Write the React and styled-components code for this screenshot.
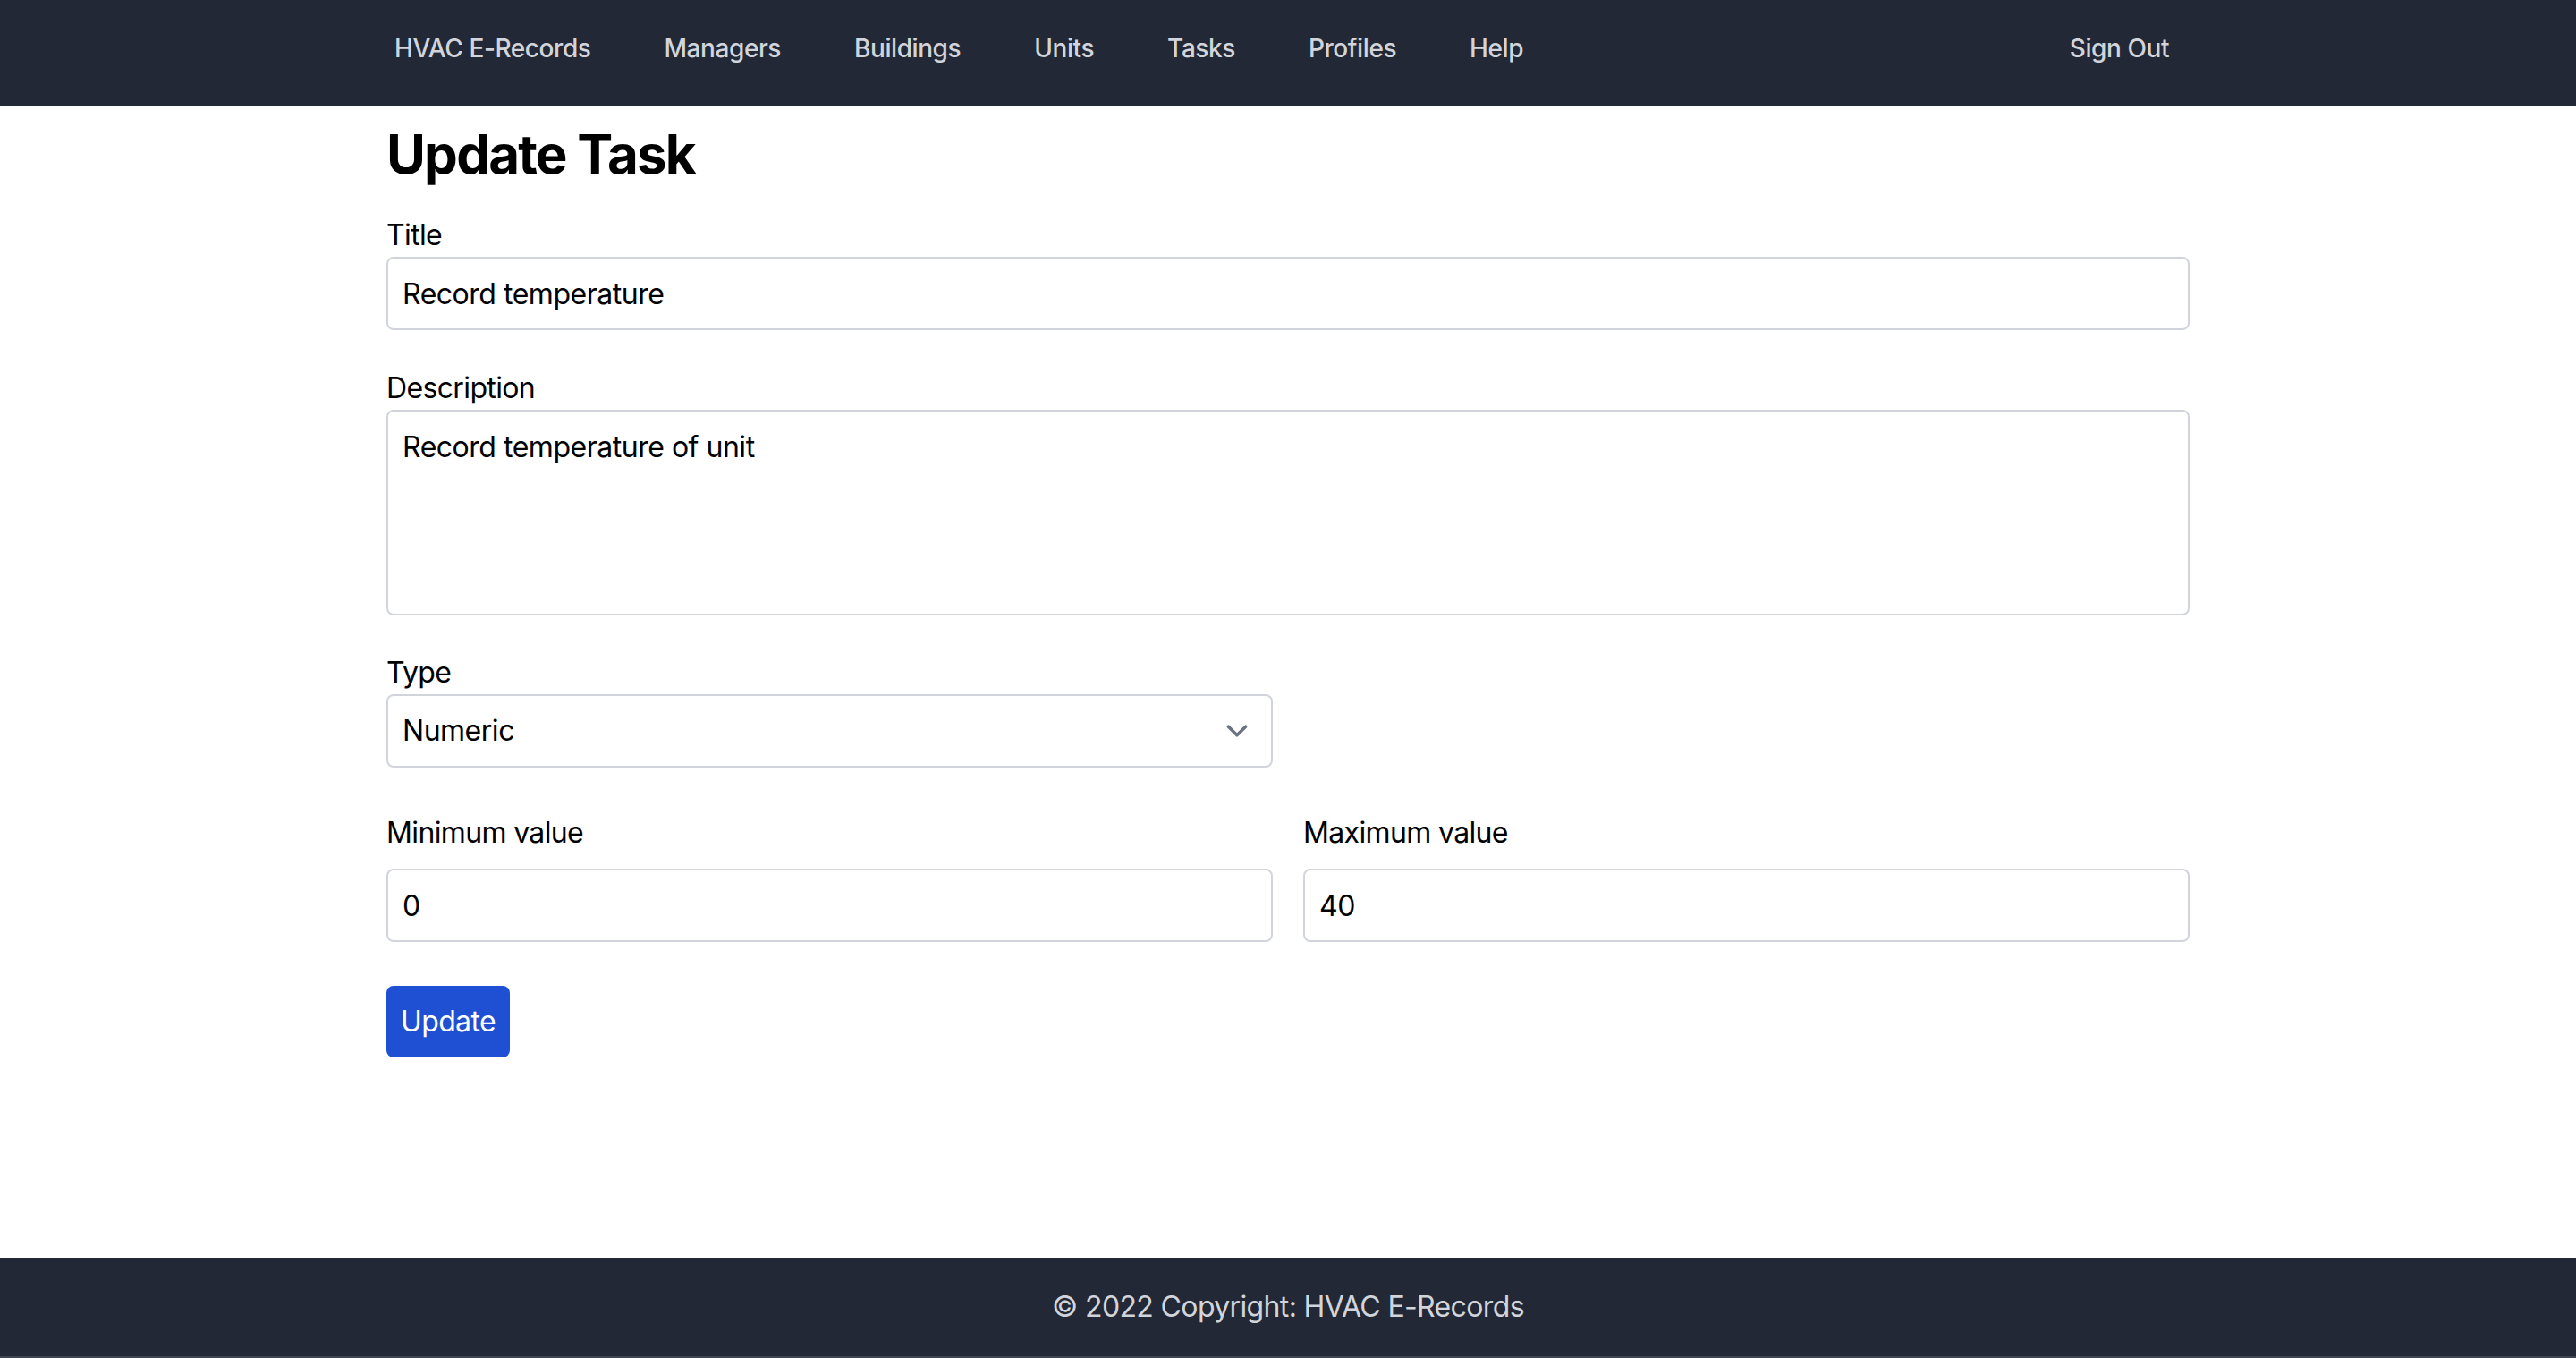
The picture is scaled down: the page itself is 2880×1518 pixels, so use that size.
import React from "react";
import styled, { createGlobalStyle } from "styled-components";

const GlobalStyle = createGlobalStyle`
  html, body {
    margin: 0;
    padding: 0;
    background: #ffffff;
  }
  body {
    font-family: Inter, "Noto Sans", "Liberation Sans", sans-serif;
    -webkit-font-smoothing: antialiased;
  }
  * { box-sizing: border-box; }
`;

const Page = styled.div`
  display: flex;
  flex-direction: column;
  min-height: 100vh;
  background: #ffffff;
`;

const NavBar = styled.nav`
  background: #222835;
  height: 118px;
  flex-shrink: 0;
`;

const NavInner = styled.div`
  width: 2016px;
  margin: 0 auto;
  height: 100%;
  display: flex;
  align-items: flex-start;
  gap: 82px;
  padding: 34px 23px 0 9px;
`;

const NavLink = styled.a`
  font-size: 28px;
  line-height: 40px;
  font-weight: 500;
  color: #d1d5db;
  text-decoration: none;
  letter-spacing: -0.015em;
  margin-left: ${(p) => (p.$push ? "auto" : "0")};
`;

const Main = styled.main`
  flex: 1;
  width: 2016px;
  margin: 0 auto;
  padding-top: 18px;
`;

const Heading = styled.h1`
  margin: 0 0 31px;
  font-size: 60px;
  line-height: 72px;
  font-weight: 700;
  color: #000000;
  letter-spacing: -0.03em;
`;

const Form = styled.form`
  display: flex;
  flex-direction: column;
`;

const Field = styled.div`
  display: flex;
  flex-direction: column;
  width: ${(p) => (p.$half ? "991px" : "100%")};
  margin-bottom: ${(p) => p.$mb || "0px"};
`;

const Label = styled.label`
  display: block;
  font-size: 32px;
  line-height: 48px;
  color: #000000;
  letter-spacing: -0.02em;
  margin-bottom: ${(p) => (p.$spaced ? "16px" : "0")};
`;

const fieldBase = `
  width: 100%;
  border: 2px solid #d1d5db;
  border-radius: 8px;
  background: #ffffff;
  font-family: Inter, "Noto Sans", "Liberation Sans", sans-serif;
  font-size: 32px;
  color: #000000;
  letter-spacing: -0.015em;
  outline: none;
  margin: 0;
`;

const TextInput = styled.input`
  ${fieldBase}
  height: 82px;
  padding: 0 16px;
  line-height: 48px;
`;

const TextArea = styled.textarea`
  ${fieldBase}
  display: block;
  height: 230px;
  padding: 16px;
  line-height: 48px;
  resize: none;
`;

const SelectWrap = styled.div`
  position: relative;
  width: 100%;
`;

const Select = styled.select`
  ${fieldBase}
  display: block;
  height: 82px;
  padding: 0 80px 0 16px;
  line-height: 48px;
  appearance: none;
  -webkit-appearance: none;
`;

const Chevron = styled.svg`
  position: absolute;
  right: 16px;
  top: 50%;
  width: 48px;
  height: 48px;
  margin-top: -24px;
  pointer-events: none;
`;

const Row = styled.div`
  display: grid;
  grid-template-columns: 1fr 1fr;
  column-gap: 34px;
  margin-top: 49px;
`;

const Button = styled.button`
  align-self: flex-start;
  margin-top: 49px;
  height: 80px;
  padding: 0 16px;
  border: none;
  border-radius: 8px;
  background: #1f4fd3;
  color: #ffffff;
  font-family: Inter, "Noto Sans", "Liberation Sans", sans-serif;
  font-size: 32px;
  line-height: 48px;
  letter-spacing: -0.02em;
  cursor: pointer;
`;

const Footer = styled.footer`
  flex-shrink: 0;
  height: 112px;
  background: #222835;
  border-bottom: 2px solid #3e4450;
  display: flex;
  align-items: center;
  justify-content: center;
`;

const FooterText = styled.p`
  margin: 0;
  font-size: 32px;
  line-height: 48px;
  color: #d1d5db;
  letter-spacing: -0.02em;
`;

const navItems = ["HVAC E-Records", "Managers", "Buildings", "Units", "Tasks", "Profiles", "Help"];

export default function App() {
  return (
    <>
      <GlobalStyle />
      <Page>
        <NavBar>
          <NavInner>
            {navItems.map((item) => (
              <NavLink key={item} href="#">
                {item}
              </NavLink>
            ))}
            <NavLink $push href="#">
              Sign Out
            </NavLink>
          </NavInner>
        </NavBar>
        <Main>
          <Heading>Update Task</Heading>
          <Form onSubmit={(e) => e.preventDefault()}>
            <Field $mb="41px">
              <Label htmlFor="title">Title</Label>
              <TextInput id="title" type="text" defaultValue="Record temperature" />
            </Field>
            <Field $mb="40px">
              <Label htmlFor="description">Description</Label>
              <TextArea id="description" defaultValue="Record temperature of unit" />
            </Field>
            <Field $half>
              <Label htmlFor="type">Type</Label>
              <SelectWrap>
                <Select id="type" defaultValue="numeric">
                  <option value="numeric">Numeric</option>
                  <option value="text">Text</option>
                  <option value="boolean">Boolean</option>
                </Select>
                <Chevron viewBox="0 0 20 20" fill="none">
                  <path
                    d="M6 8l4 4 4-4"
                    stroke="#6b7280"
                    strokeWidth="1.5"
                    strokeLinecap="round"
                    strokeLinejoin="round"
                  />
                </Chevron>
              </SelectWrap>
            </Field>
            <Row>
              <Field>
                <Label $spaced htmlFor="min">Minimum value</Label>
                <TextInput id="min" type="text" defaultValue="0" />
              </Field>
              <Field>
                <Label $spaced htmlFor="max">Maximum value</Label>
                <TextInput id="max" type="text" defaultValue="40" />
              </Field>
            </Row>
            <Button type="submit">Update</Button>
          </Form>
        </Main>
        <Footer>
          <FooterText>© 2022 Copyright: HVAC E-Records</FooterText>
        </Footer>
      </Page>
    </>
  );
}
